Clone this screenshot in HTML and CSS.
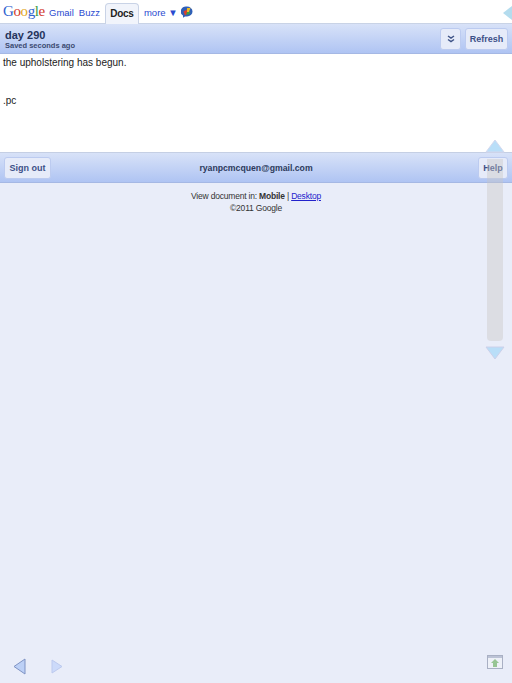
FILE: index.html
```html
<!DOCTYPE html>
<html>
<head>
  <meta charset="UTF-8">
  <title>day 290</title>
  <link rel="stylesheet" href="styles.css">
</head>
<body>
  <!-- Top navigation -->
  <div class="topnav">
    <span class="logo"><span class="blue">G</span><span class="red">o</span><span class="yellow">o</span><span class="blue">g</span><span class="green">l</span><span class="red">e</span></span>
    <a class="navlink">Gmail</a>
    <a class="navlink">Buzz</a>
    <span class="tab">Docs</span>
    <a class="navlink more">more &#9660;</a>
    <svg class="talk" width="12" height="12" viewBox="0 0 12 12">
      <path d="M6 .5a5.5 5 0 0 1 5.5 5 5.5 5 0 0 1-5.5 5H4L2 11.800V9.500A5.500 5 0 0 1 6 .5z" fill="#2f5fb8"/>
      <path d="M2.500 5.500 6 3.500V8L4 9.500z" fill="#d8402f"/>
      <path d="M6 2h3.500L8 6H6z" fill="#eebb22"/>
      <path d="M6 6h3.500L8 8.500H5z" fill="#3f9b45"/>
    </svg>
  </div>

  <!-- Document title bar -->
  <div class="bar titlebar">
    <div class="docinfo">
      <div class="doctitle">day 290</div>
      <div class="saved">Saved seconds ago</div>
    </div>
    <div class="btngroup">
      <span class="btn btn-icon">
        <svg width="8" height="8" viewBox="0 0 8 8"><path d="M1 1l3 2 3-2M1 4.500l3 2 3-2" fill="none" stroke="#3f5488" stroke-width="1.500"/></svg>
      </span>
      <span class="btn btn-refresh">Refresh</span>
    </div>
  </div>

  <!-- Document body -->
  <div class="doc">
    <p>the upholstering has begun.</p>
    <p class="sig">.pc</p>
  </div>

  <!-- Footer bar -->
  <div class="bar footbar">
    <span class="btn btn-signout">Sign out</span>
    <span class="email">ryanpcmcquen@gmail.com</span>
    <span class="btn btn-help">Help</span>
  </div>

  <div class="foot">
    <div>View document in: <b>Mobile</b> | <a href="#">Desktop</a></div>
    <div>&copy;2011 Google</div>
  </div>

  <!-- Overlays drawn by the reader on top of the page -->
  <svg class="overlay side-arrow" width="9" height="14" viewBox="0 0 9 14"><path d="M9 0 0 7l9 7z" fill="#b4dcee"/></svg>
  <svg class="overlay scroll-up" width="20" height="14" viewBox="0 0 20 14"><path d="M10 1 1 13h18z" fill="#b9def8" stroke="#d5d8ee"/></svg>
  <div class="overlay scroll-track"></div>
  <svg class="overlay scroll-down" width="20" height="14" viewBox="0 0 20 14"><path d="M10 13 1 1h18z" fill="#b9def8" stroke="#ccd0ea"/></svg>
  <svg class="overlay page-prev" width="13" height="17" viewBox="0 0 13 17"><path d="M12 1 1 8.500 12 16z" fill="#bcd0f6" stroke="#7f93c4"/></svg>
  <svg class="overlay page-next" width="12" height="15" viewBox="0 0 12 15"><path d="M1 1l10 6.500L1 14z" fill="#ccdafa" stroke="#bcc9ee"/></svg>
  <svg class="overlay upload" width="16" height="14" viewBox="0 0 16 14">
    <rect x=".5" y=".5" width="15" height="13" fill="#eef1f8" stroke="#a9b0c4"/>
    <rect x="1" y="1" width="14" height="2" fill="#bcc3d6"/>
    <path d="M8 4l4 4H10v4H6V8H4z" fill="#97c594"/>
  </svg>
</body>
</html>
```

FILE: styles.css
```css
/* Reset */
html, body {
  margin: 0;
  padding: 0;
  height: 683px;
  overflow: hidden;
  font-family: "Liberation Sans", Arial, sans-serif;
  background-color: #e9edf9;
}

/* Top navigation */
.topnav {
  display: flex;
  align-items: center;
  box-sizing: border-box;
  height: 24px;
  padding: 1px 0 0 3px;
  background-color: #fff;
  border-bottom: 1px solid #c9d3e6;
  font-size: 9.5px;
}

.logo {
  font-family: "Liberation Serif", serif;
  font-size: 15px;
  letter-spacing: -0.4px;
  width: 46px;
  margin-top: -2px;
}

.blue { color: #2f62d0; }
.red { color: #d2382c; }
.yellow { color: #e3a81c; }
.green { color: #3b9a44; }

.navlink {
  color: #2a4ad0;
  margin-right: 5px;
}

.tab {
  align-self: flex-end;
  box-sizing: border-box;
  width: 34px;
  height: 21px;
  margin: 0 5px -1px 0;
  line-height: 20px;
  text-align: center;
  font-size: 10px;
  font-weight: bold;
  letter-spacing: -0.3px;
  color: #222;
  background: #f1f4fb;
  border: 1px solid #c9d3e6;
  border-bottom: none;
  border-radius: 4px 4px 0 0;
}

.navlink.more {
  margin-right: 3px;
}

/* Blue bars */
.bar {
  display: flex;
  align-items: center;
  justify-content: space-between;
  box-sizing: border-box;
  height: 30px;
  background: linear-gradient(#d8e2f8, #afc4f3);
  border-bottom: 1px solid #a5b8e4;
}

.titlebar {
  padding: 1px 4px 0 5px;
}

.footbar {
  display: grid;
  grid-template-columns: 1fr auto 1fr;
  height: 31px;
  padding: 0 4px;
  border-top: 1px solid #c5cfe4;
}

.doctitle {
  font-size: 11px;
  font-weight: bold;
  color: #25345c;
}

.saved {
  font-size: 7.5px;
  font-weight: bold;
  color: #3b4a70;
}

.btngroup {
  display: flex;
  gap: 4px;
}

.btn {
  display: flex;
  align-items: center;
  justify-content: center;
  box-sizing: border-box;
  height: 22px;
  font-size: 9px;
  font-weight: bold;
  color: #3d5088;
  background: #e6ebf9;
  border: 1px solid #bccbf0;
  border-radius: 3px;
}

.btn-icon { width: 21px; }
.btn-refresh { width: 43px; }
.btn-signout { width: 47px; justify-self: start; }
.btn-help { width: 30px; justify-self: end; }

.email {
  font-size: 8.7px;
  font-weight: bold;
  color: #2c3a5c;
}

/* Document */
.doc {
  height: 98px;
  background-color: #fff;
  padding: 0 3px;
  box-sizing: border-box;
  font-size: 10px;
  color: #1c1c1c;
}

.doc p {
  margin: 0;
  padding-top: 2px;
  line-height: 13px;
}

.doc .sig {
  padding-top: 25px;
}

/* Footer text */
.foot {
  padding-top: 7px;
  text-align: center;
  font-size: 8.500px;
  letter-spacing: -0.2px;
  line-height: 12px;
  color: #333;
}

.foot a {
  color: #2222cc;
}

/* Things floating over the page */
.overlay {
  position: absolute;
}

.side-arrow { left: 503px; top: 6px; }
.scroll-up { left: 485px; top: 139px; }
.scroll-down { left: 485px; top: 346px; }
.page-prev { left: 13px; top: 658px; }
.page-next { left: 51px; top: 659px; }
.upload { left: 487px; top: 655px; }

.scroll-track {
  left: 487px;
  top: 159px;
  width: 16px;
  height: 182px;
  background: rgba(200, 198, 195, 0.4);
  border-radius: 0 0 4px 4px;
}
```
